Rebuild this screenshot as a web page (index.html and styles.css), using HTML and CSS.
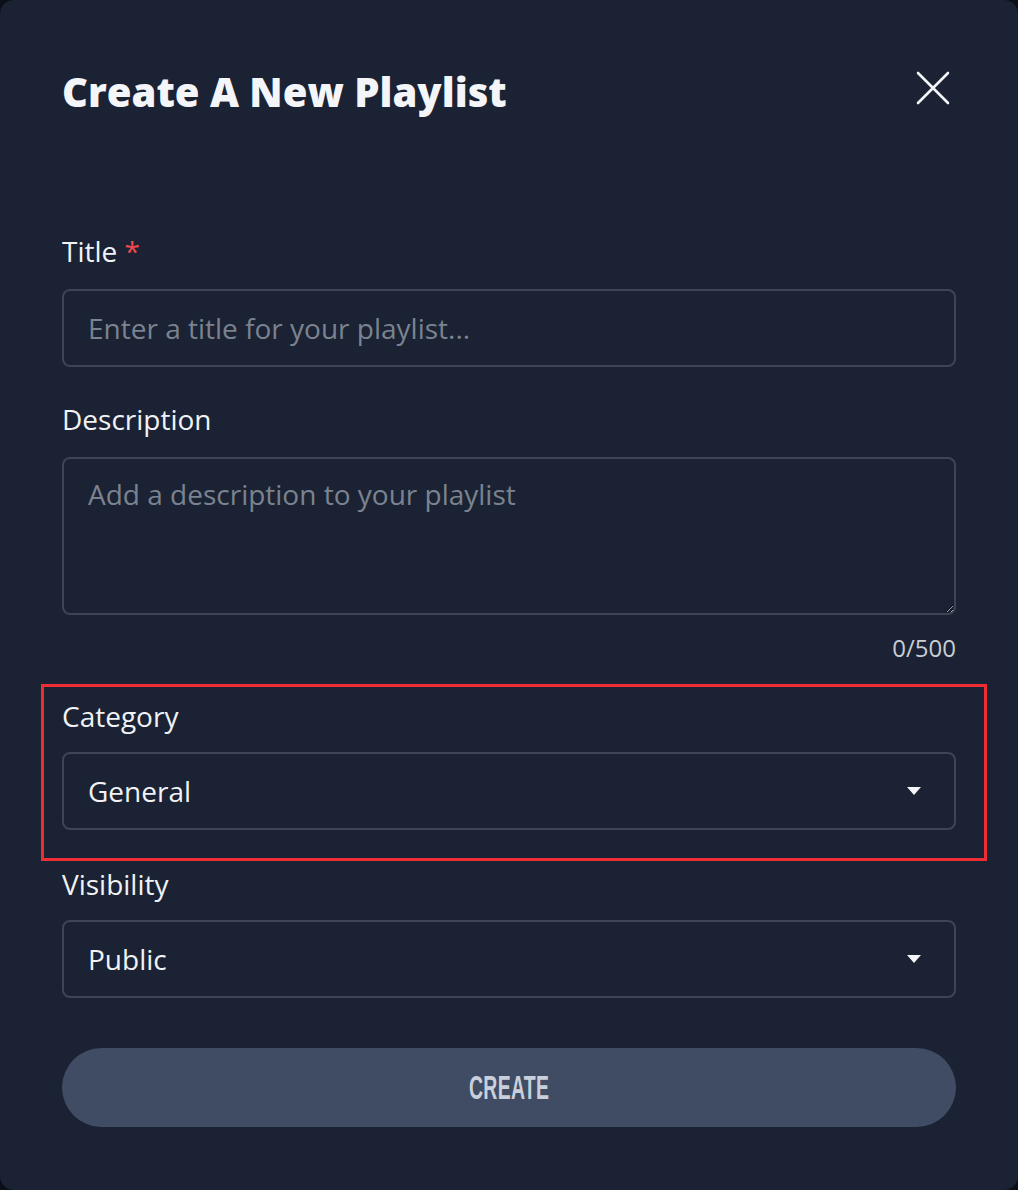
FILE: index.html
```html
<!DOCTYPE html>
<html lang="en">
<head>
<meta charset="utf-8">
<title>Create A New Playlist</title>
<link rel="stylesheet" href="styles.css">
</head>
<body>
<div class="dialog">
  <div class="header">
    <h1 class="title">Create A New Playlist</h1>
    <button class="close" aria-label="Close">
      <svg width="34" height="34" viewBox="0 0 34 34"><path d="M2 2 L32 32 M32 2 L2 32" stroke="#f3f5f8" stroke-width="2.6" stroke-linecap="round" fill="none"/></svg>
    </button>
  </div>
  <form class="form">
    <div class="field">
      <label class="label">Title <span class="req">*</span></label>
      <input class="input" type="text" placeholder="Enter a title for your playlist...">
    </div>
    <div class="field field-desc">
      <label class="label">Description</label>
      <textarea class="input textarea" placeholder="Add a description to your playlist"></textarea>
      <div class="counter">0/500</div>
    </div>
    <div class="highlight">
      <label class="label label-tight">Category</label>
      <div class="input select"><span>General</span>
        <svg class="caret" width="14" height="8" viewBox="0 0 14 8"><path d="M0 0 H14 L7 8 Z" fill="#f3f5f8"/></svg>
      </div>
    </div>
    <div class="field field-vis">
      <label class="label label-tight">Visibility</label>
      <div class="input select"><span>Public</span>
        <svg class="caret" width="14" height="8" viewBox="0 0 14 8"><path d="M0 0 H14 L7 8 Z" fill="#f3f5f8"/></svg>
      </div>
    </div>
    <button type="button" class="create"><span>CREATE</span></button>
  </form>
</div>
</body>
</html>
```
FILE: styles.css
```css
* { box-sizing: border-box; }
html, body { margin: 0; padding: 0; }
body {
  background: #0b0f18;
  font-family: "Open Sans", "Noto Sans", sans-serif;
  color: #f0f2f5;
}
.dialog {
  width: 1018px;
  height: 1190px;
  background: #1a2233;
  border-radius: 14px;
  padding: 68px 62px 0 62px;
}
.header {
  display: flex;
  justify-content: space-between;
  align-items: flex-start;
  height: 48px;
}
.title {
  margin: 0;
  font-size: 40px;
  line-height: 48px;
  font-weight: 800;
  color: #f3f5f8;
}
.close {
  background: none;
  border: none;
  padding: 0;
  margin: 3px 6px 0 0;
  width: 34px;
  height: 34px;
  cursor: pointer;
}
.close svg { display: block; }
.form {
  margin-top: 119px;
  display: flex;
  flex-direction: column;
}
.field { margin-bottom: 36px; }
.label {
  display: block;
  font-size: 28px;
  line-height: 32px;
  margin-bottom: 22px;
  color: #f0f2f5;
}
.label-tight { margin-bottom: 20px; }
.req { color: #f0494c; }
.input {
  display: block;
  width: 100%;
  height: 78px;
  background: #1a2233;
  border: 2px solid #3d4556;
  border-radius: 8px;
  padding: 0 24px;
  font-family: "Open Sans", "Noto Sans", sans-serif;
  font-size: 28px;
  color: #f0f2f5;
  outline: none;
}
.input::placeholder { color: #7b8290; }
.textarea {
  height: 158px;
  padding-top: 16px;
  line-height: 38px;
  resize: vertical;
}
.field-desc { margin-bottom: 21px; }
.counter {
  text-align: right;
  font-size: 24px;
  line-height: 30px;
  margin-top: 18px;
  color: #c9cdd5;
}
.highlight {
  margin: 0 -31px 7px -21px;
  border: 3px solid #ee2e33;
  padding: 13px 28px 28px 18px;
}
.select {
  display: flex;
  align-items: center;
  justify-content: space-between;
  padding-right: 33px;
}
.caret { display: block; }
.field-vis { margin-bottom: 50px; }
.create {
  height: 79px;
  width: 100%;
  border: none;
  border-radius: 40px;
  background: #404c63;
  color: #c9cfdb;
  cursor: pointer;
  display: flex;
  align-items: center;
  justify-content: center;
  padding: 0;
}
.create span {
  display: inline-block;
  font-family: "Liberation Sans", Arial, sans-serif;
  font-weight: 700;
  font-size: 33px;
  transform: scaleX(0.59);
  letter-spacing: 0.5px;
}
```
